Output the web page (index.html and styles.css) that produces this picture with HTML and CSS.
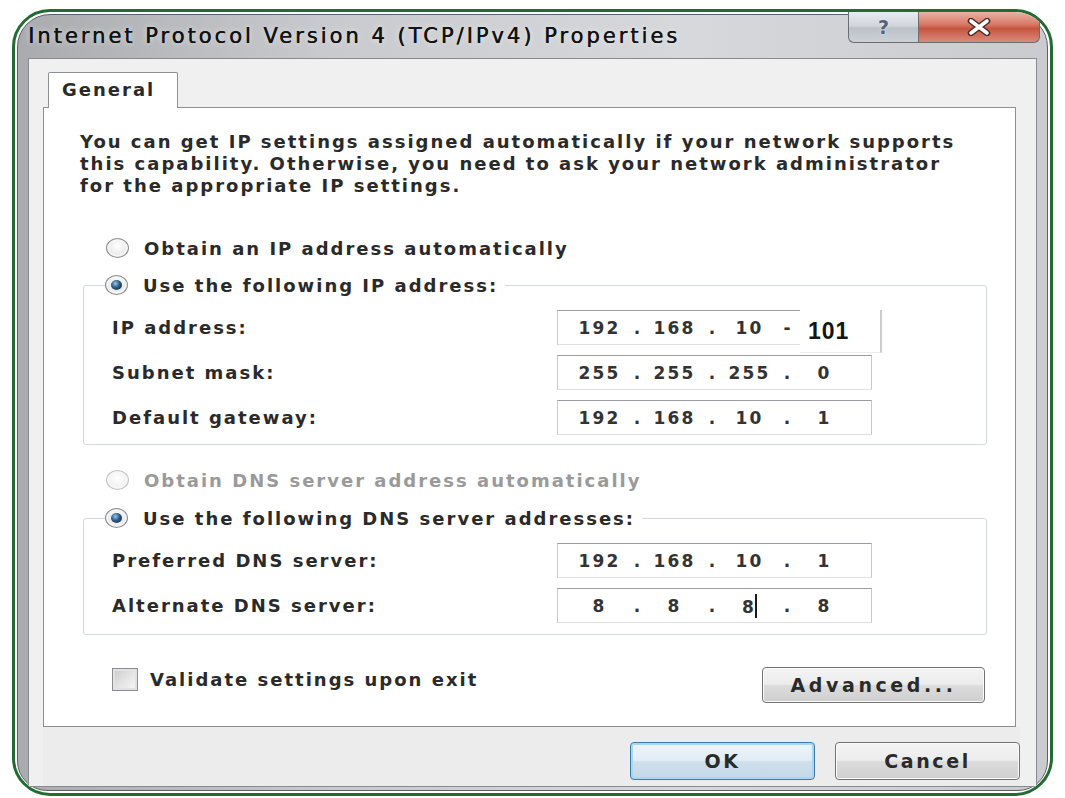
FILE: index.html
```html
<!DOCTYPE html>
<html lang="en">
<head>
<meta charset="utf-8">
<title>Internet Protocol Version 4 (TCP/IPv4) Properties</title>
<link rel="stylesheet" href="styles.css">
</head>
<body>
<div class="screen">
  <div class="window">
    <div class="titlebar">
      <span class="title">Internet Protocol Version 4 (TCP/IPv4) Properties</span>
      <div class="caption">
        <span class="cap-btn help">?</span>
        <span class="cap-btn close">
          <svg width="24" height="18" viewBox="0 0 24 18">
            <path d="M4 3 L20 15 M20 3 L4 15" stroke="#4a2a26" stroke-width="6.5" stroke-linecap="round"/>
            <path d="M4 3 L20 15 M20 3 L4 15" stroke="#fff" stroke-width="3.6" stroke-linecap="round"/>
          </svg>
        </span>
      </div>
    </div>

    <div class="client">
      <div class="tabs"><span class="tab">General</span></div>

      <div class="panel">
        <p class="intro">You can get IP settings assigned automatically if your network supports<br>this capability. Otherwise, you need to ask your network administrator<br>for the appropriate IP settings.</p>

        <div class="option"><span class="radio"></span>Obtain an IP address automatically</div>

        <div class="group group-ip">
          <div class="legend"><span class="radio on"></span>Use the following IP address:</div>
          <div class="field-row">
            <span class="label">IP address:</span>
            <div class="ipbox">
              <span class="seg">192</span><span class="dot">.</span><span class="seg">168</span><span class="dot">.</span><span class="seg">10</span><span class="dot">-</span><span class="seg"></span>
              <span class="patch">101</span>
            </div>
          </div>
          <div class="field-row">
            <span class="label">Subnet mask:</span>
            <div class="ipbox">
              <span class="seg">255</span><span class="dot">.</span><span class="seg">255</span><span class="dot">.</span><span class="seg">255</span><span class="dot">.</span><span class="seg">0</span>
            </div>
          </div>
          <div class="field-row">
            <span class="label">Default gateway:</span>
            <div class="ipbox">
              <span class="seg">192</span><span class="dot">.</span><span class="seg">168</span><span class="dot">.</span><span class="seg">10</span><span class="dot">.</span><span class="seg">1</span>
            </div>
          </div>
        </div>

        <div class="option disabled"><span class="radio"></span>Obtain DNS server address automatically</div>

        <div class="group group-dns">
          <div class="legend"><span class="radio on"></span>Use the following DNS server addresses:</div>
          <div class="field-row">
            <span class="label">Preferred DNS server:</span>
            <div class="ipbox">
              <span class="seg">192</span><span class="dot">.</span><span class="seg">168</span><span class="dot">.</span><span class="seg">10</span><span class="dot">.</span><span class="seg">1</span>
            </div>
          </div>
          <div class="field-row">
            <span class="label">Alternate DNS server:</span>
            <div class="ipbox">
              <span class="seg">8</span><span class="dot">.</span><span class="seg">8</span><span class="dot">.</span><span class="seg">8<span class="caret"></span></span><span class="dot">.</span><span class="seg">8</span>
            </div>
          </div>
        </div>

        <div class="bottom-row">
          <label class="check"><span class="checkbox"></span>Validate settings upon exit</label>
          <button class="btn advanced">Advanced...</button>
        </div>
      </div>

      <div class="footer">
        <button class="btn default">OK</button>
        <button class="btn">Cancel</button>
      </div>
    </div>
  </div>
</div>
</body>
</html>
```

FILE: styles.css
```css
html, body {
  margin: 0;
  padding: 0;
  background: #ffffff;
}

body {
  font-family: "DejaVu Sans", "Noto Sans", sans-serif;
  font-size: 18px;
  font-weight: bold;
  color: #2a2a2a;
  letter-spacing: 2px;
}

/* green rounded outline around the whole dialog */
.screen {
  box-sizing: border-box;
  width: 1041px;
  height: 787px;
  margin: 9px 0 0 12px;
  padding: 2px;
  border: 3px solid #226b33;
  border-radius: 38px;
  background: #ffffff;
  overflow: hidden;
}

/* glass window frame */
.window {
  box-sizing: border-box;
  height: 100%;
  display: flex;
  flex-direction: column;
  padding: 0 10px 3px 10px;
  border: 1px solid #5d6065;
  border-radius: 33px 33px 30px 30px;
  background: linear-gradient(90deg, #a9abae 0%, #c8cacd 30%, #d6d8db 65%, #c9cbce 100%);
}

.titlebar {
  height: 43px;
  flex: none;
  display: flex;
  justify-content: space-between;
  align-items: flex-start;
}

.title {
  margin-top: 8px;
  line-height: 26px;
  font-size: 21px;
  font-weight: normal;
  letter-spacing: 3px;
  color: #121212;
  white-space: nowrap;
  text-shadow: 0.4px 0 0 #121212, 0 0 6px rgba(255, 255, 255, 0.7);
}

.caption {
  display: flex;
  margin-top: -3px;
  margin-right: -3px;
}

.cap-btn {
  box-sizing: border-box;
  height: 31px;
  display: flex;
  align-items: center;
  justify-content: center;
  border: 1px solid #6a6e74;
  border-top: none;
}

.help {
  width: 70px;
  border-right: none;
  border-radius: 0 0 0 6px;
  background: linear-gradient(180deg, #e9ebee 0%, #d2d6dc 45%, #bcc1c8 55%, #cdd1d7 100%);
  font-family: "DejaVu Sans", sans-serif;
  font-weight: bold;
  font-size: 19px;
  letter-spacing: 0;
  color: #55607a;
  text-shadow: 0 0 2px #ffffff;
}

.close {
  width: 122px;
  border-radius: 0 0 6px 0;
  background: linear-gradient(180deg, #eab2a6 0%, #d77866 42%, #c6553f 55%, #d98c7c 100%);
}

.client {
  flex: 1;
  display: flex;
  flex-direction: column;
  padding: 13px 20px 0 14px;
  border: 1px solid #878b90;
  background: #f0f0f0;
}

.tabs {
  display: flex;
  flex: none;
}

.tab {
  box-sizing: border-box;
  height: 36px;
  width: 130px;
  margin-left: 5px;
  margin-bottom: -1px;
  padding-left: 13px;
  line-height: 33px;
  border: 1px solid #8c8f96;
  border-bottom: none;
  border-radius: 2px 2px 0 0;
  background: #ffffff;
  position: relative;
  z-index: 1;
  letter-spacing: 2px;
}

.panel {
  box-sizing: border-box;
  height: 620px;
  flex: none;
  padding: 23px 28px 0 36px;
  border: 1px solid #8c8f96;
  background: #ffffff;
}

.intro {
  margin: 0;
  line-height: 22px;
  white-space: nowrap;
}

.option {
  height: 24px;
  display: flex;
  align-items: center;
  gap: 15px;
  padding-left: 26px;
  margin-top: 39px;
}

.option.disabled {
  margin-top: 23px;
  color: #9a9a9a;
}

.radio {
  flex: none;
  box-sizing: border-box;
  width: 23px;
  height: 20px;
  border-radius: 50%;
  border: 1px solid #8a8c8e;
  background: radial-gradient(ellipse at 50% 40%, #ffffff 0%, #ececec 55%, #c9c9c9 100%);
  box-shadow: inset 0 0 0 2px #f6f6f6;
  position: relative;
}

.disabled .radio {
  border-color: #c3c3c3;
  background: radial-gradient(ellipse at 50% 40%, #ffffff 0%, #f1f1f1 60%, #dedede 100%);
}

.radio.on::after {
  content: "";
  position: absolute;
  left: 5px;
  top: 4px;
  width: 11px;
  height: 10px;
  border-radius: 50%;
  background: radial-gradient(circle at 40% 35%, #9cc4e6 0%, #2b5a86 45%, #0e1f35 100%);
}

.group {
  margin-left: 3px;
  padding: 0 0 9px 28px;
  border: 1px solid #d2d8de;
  border-radius: 3px;
}

.group-ip {
  margin-top: 25px;
}

.group-dns {
  margin-top: 26px;
  padding-bottom: 11px;
}

.legend {
  display: flex;
  width: max-content;
  align-items: center;
  gap: 15px;
  height: 24px;
  margin: -13px 0 0 -7px;
  padding-right: 7px;
  background: #ffffff;
}

.field-row {
  display: flex;
  align-items: center;
  height: 35px;
  margin-top: 10px;
}

.legend + .field-row {
  margin-top: 13px;
}

.label {
  width: 445px;
  flex: none;
  white-space: nowrap;
}

.ipbox {
  box-sizing: border-box;
  width: 315px;
  height: 35px;
  display: flex;
  align-items: center;
  padding-left: 10px;
  border: 1px solid;
  border-color: #9a9ea4 #c6cacf #dde1e5 #c6cacf;
  background: #ffffff;
  position: relative;
  font-size: 17px;
  letter-spacing: 2.2px;
  color: #333333;
}

.seg {
  width: 63px;
  text-align: center;
  flex: none;
  white-space: nowrap;
}

.dot {
  width: 12px;
  text-align: center;
  flex: none;
  letter-spacing: 0;
}

.caret {
  display: inline-block;
  width: 2px;
  height: 24px;
  margin-left: -1px;
  vertical-align: -5px;
  background: #1a1a1a;
}

/* pasted-in last octet sitting over the address box */
.patch {
  position: absolute;
  left: 242px;
  top: -1px;
  box-sizing: border-box;
  width: 82px;
  height: 43px;
  padding: 0 0 0 8px;
  background: #ffffff;
  border-right: 2px solid #c9cbce;
  border-bottom: 1px solid #eeeeee;
  font-family: "Liberation Sans", Arial, sans-serif;
  font-size: 23px;
  letter-spacing: 1px;
  color: #151515;
  display: flex;
  align-items: center;
}

.bottom-row {
  display: flex;
  justify-content: space-between;
  align-items: flex-start;
  margin-top: 32px;
}

.check {
  display: flex;
  align-items: center;
  gap: 12px;
  padding-left: 32px;
  height: 24px;
}

.checkbox {
  flex: none;
  box-sizing: border-box;
  width: 26px;
  height: 23px;
  border: 1px solid #8b8d90;
  background: linear-gradient(135deg, #c9c9c9 0%, #e6e6e6 55%, #f7f7f7 100%);
  box-shadow: inset 0 0 0 2px #e2e2e2;
}

.btn {
  box-sizing: border-box;
  height: 37px;
  width: 185px;
  border: 1px solid #707275;
  border-radius: 4px;
  background: linear-gradient(180deg, #f4f4f4 0%, #ececec 48%, #dcdcdc 52%, #cfcfcf 100%);
  box-shadow: inset 0 0 0 1px #fbfbfb;
  font-family: "DejaVu Sans", sans-serif;
  font-size: 19px;
  font-weight: bold;
  letter-spacing: 2.6px;
  color: #2a2a2a;
  padding: 0;
}

.advanced {
  width: 223px;
  height: 36px;
  margin-right: 2px;
  letter-spacing: 3.6px;
}

.footer {
  flex: 1;
  display: flex;
  justify-content: flex-end;
  align-items: flex-start;
  gap: 20px;
  padding-top: 15px;
  margin-right: -4px;
  background: #ececec;
}

.footer .btn {
  height: 38px;
}

.btn.default {
  border-color: #3d7bad;
  background: linear-gradient(180deg, #eef5fa 0%, #e2edf5 48%, #cfe0ec 52%, #c4d8e6 100%);
  box-shadow: inset 0 0 0 2px #a9d6f3;
}
```
